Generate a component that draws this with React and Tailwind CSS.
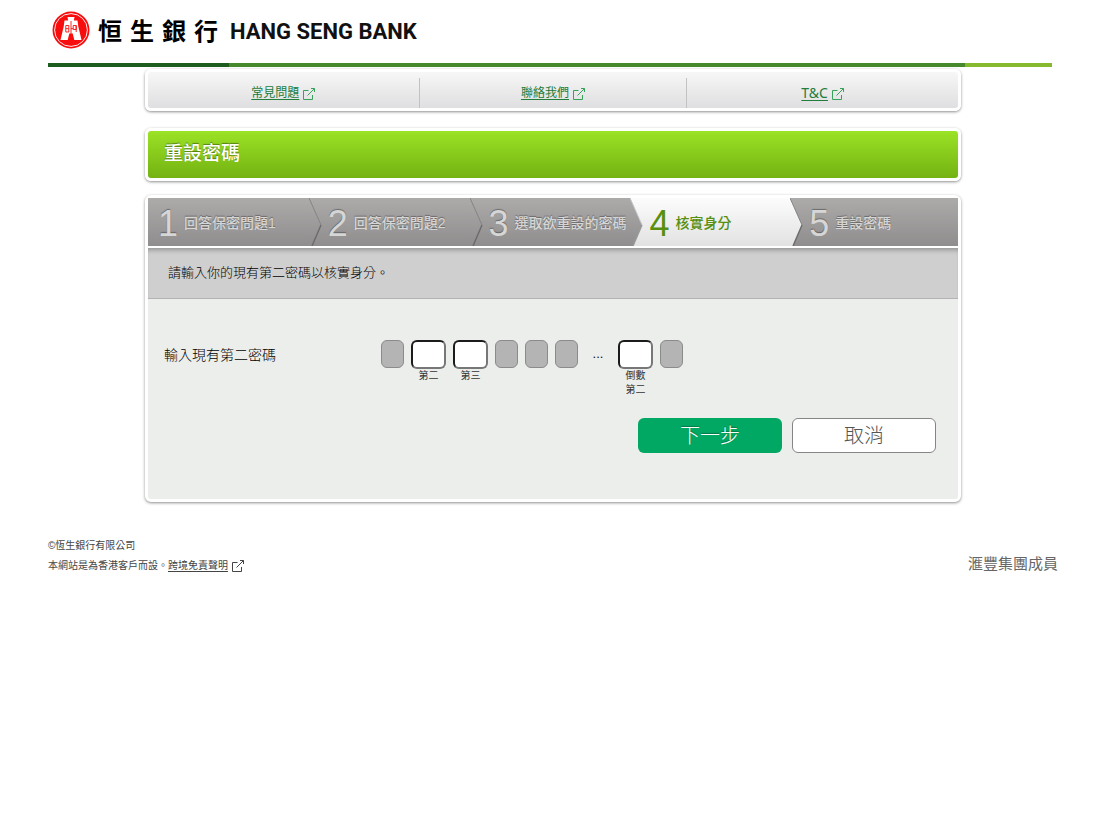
import React from 'react';

const NAV_LINKS = [
    { label: '常見問題', size: 'text-xs' },
    { label: '聯絡我們', size: 'text-xs' },
    { label: 'T&C', size: 'text-sm' },
];

const STEPS = [
    { label: '回答保密問題1' },
    { label: '回答保密問題2' },
    { label: '選取欲重設的密碼' },
    { label: '核實身分', active: true },
    { label: '重設密碼' },
];

const PASSWORD_CELLS = [
    { id: 'p1' },
    { id: 'p2', label: '第二' },
    { id: 'p3', label: '第三' },
    { id: 'p4' },
    { id: 'p5' },
    { id: 'p6' },
    { id: 'gap', ellipsis: true },
    { id: 'p-2', label: '倒數第二' },
    { id: 'p-1' },
];

const ExternalIcon = () => (
    <svg viewBox="0 0 12 12" className="h-3 w-3" fill="none" stroke="currentColor" strokeWidth="1" aria-hidden="true">
        <path d="M5.5 2.5H.5v9h9V7" />
        <path d="M4.5 7.5 11.5.5M8 .5h3.5V4" />
    </svg>
);

const BankLogo = () => (
    <svg viewBox="0 0 38 38" className="h-[38px] w-[38px] shrink-0" aria-hidden="true">
        <circle cx="19" cy="19" r="18.5" fill="#f70d0d" />
        <circle cx="19" cy="19" r="16.4" fill="none" stroke="#fff" strokeWidth="0.9" />
        <path d="M15.5 6h7l-.6 3.5h3.6l.8 6L29.5 29h-7.2l-1.6-6.5h-3.4L15.7 29H8.5l3.2-13.5.8-6h3.6z" fill="#fff" />
        <path
            d="M19 10v13M13.8 14.5h3v6.5h-3zM13.8 17.7h3M21.2 14.5h3v4h-3zM24.2 14.5V21M19 17.7h2.2"
            fill="none"
            stroke="#f70d0d"
            strokeWidth="0.9"
        />
    </svg>
);

const StepArrow = ({ active, nextActive }) => {
    const id = active ? 'arrow-light' : nextActive ? 'arrow-dark-light' : 'arrow-dark';
    return (
        <svg
            viewBox="0 0 13 48"
            preserveAspectRatio="none"
            className={
                nextActive
                    ? 'h-12 w-[13px] shrink-0 bg-linear-to-b from-[#fcfcfc] to-[#e2e2e3]'
                    : 'h-12 w-[13px] shrink-0 bg-linear-to-b from-[#acabaa] to-[#8f8d8d]'
            }
            aria-hidden="true"
        >
            <defs>
                <linearGradient id={id} x1="0" y1="0" x2="0" y2="1">
                    <stop offset="0" stopColor={active ? '#fcfcfc' : '#acabaa'} />
                    <stop offset="1" stopColor={active ? '#e2e2e3' : '#8f8d8d'} />
                </linearGradient>
            </defs>
            <path d="M0 0 12 27 3 48H0z" fill={`url(#${id})`} />
            <path d="M0 0 12 27" fill="none" stroke={nextActive ? '#c4c4c4' : '#858484'} strokeWidth="1" />
            <path d="M12 27 3 48" fill="none" stroke={nextActive ? '#999' : '#6b6a6a'} strokeWidth="1.4" />
        </svg>
    );
};

const Card = ({ className = '', children }) => (
    <div className={`rounded-md border-[3px] border-white shadow-[0_1px_3px_rgba(0,0,0,0.45)] ${className}`}>
        {children}
    </div>
);

const PasswordCell = ({ id, label, ellipsis }) => {
    if (ellipsis) {
        return <span className="w-[26px] text-center text-[13px] leading-7 text-[#111]">...</span>;
    }
    if (!label) {
        return (
            <input
                type="password"
                disabled
                aria-label={id}
                className="h-7 w-[23px] rounded-md border border-[#8b8b8b] bg-[#b5b4b5]"
            />
        );
    }
    return (
        <div className="flex w-[35px] flex-col items-center">
            <input
                id={id}
                type="password"
                maxLength={1}
                className="h-[29px] w-full rounded-md border-2 border-t-[#1b1b1b] border-r-[#777] border-b-[#777] border-l-[#1b1b1b] bg-white text-center text-sm"
            />
            <label htmlFor={id} className="w-5 text-[10px] leading-[14px] text-[#333]">
                {label}
            </label>
        </div>
    );
};

const App = () => (
    <div
        lang="zh-Hant"
        className="min-h-screen bg-white pr-[42px] pl-12 font-['Liberation_Sans','Noto_Sans_CJK_TC',sans-serif] text-[#444]"
    >
        <header className="mr-1.5">
            <div className="flex h-[63px] items-center pb-1 pl-1">
                <BankLogo />
                <div className="ml-2 flex gap-2 font-['Noto_Sans_CJK_TC',sans-serif] text-2xl leading-none font-bold text-black">
                    <span>恒</span>
                    <span>生</span>
                    <span>銀</span>
                    <span>行</span>
                </div>
                <span className="ml-3 pt-1 font-['Roboto',sans-serif] text-[22px] leading-none font-bold text-[#111]">
                    HANG SENG BANK
                </span>
            </div>
            <div className="flex h-1">
                <div className="w-[18%] bg-[#1d5e20]" />
                <div className="flex-1 bg-[#468a2d]" />
                <div className="w-[87px] bg-[#86b92f]" />
            </div>
        </header>

        <main className="mx-auto mt-0.5 max-w-[816px]">
            <Card className="bg-linear-to-b from-[#f7f7f7] to-[#dfdfe1]">
                <nav className="grid h-9 grid-cols-[271fr_268fr_272fr] items-end">
                    {NAV_LINKS.map(({ label, size }, i) => (
                        <div
                            key={label}
                            className={`flex h-[30px] items-center justify-center ${i > 0 ? 'border-l border-[#c2c2c2]' : ''}`}
                        >
                            <a href="#" className="flex items-center gap-1 text-[#217d3b]">
                                <span
                                    className={`font-['Noto_Sans','Noto_Sans_CJK_TC',sans-serif] leading-4 underline underline-offset-2 ${size}`}
                                >
                                    {label}
                                </span>
                                <span className="pt-0.5 text-[#37a35a]">
                                    <ExternalIcon />
                                </span>
                            </a>
                        </div>
                    ))}
                </nav>
            </Card>

            <Card className="mt-[17px] bg-linear-to-b from-[#9be325] to-[#74b212]">
                <h1 className="flex h-[47px] items-center px-4 text-[19px] font-medium text-white [text-shadow:0_-1px_1px_rgba(0,0,0,0.4)]">
                    重設密碼
                </h1>
            </Card>

            <Card className="mt-3.5 bg-[#eceeeb]">
                <ol className="grid grid-cols-[174fr_161fr_161fr_160fr_155fr] border-b-2 border-white">
                    {STEPS.map((step, i) => (
                        <li
                            key={step.label}
                            className={`flex h-12 items-center ${
                                step.active
                                    ? 'bg-linear-to-b from-[#fcfcfc] to-[#e2e2e3] text-[#578f0e]'
                                    : 'bg-linear-to-b from-[#acabaa] to-[#8f8d8d] text-[#d6d6d6] [text-shadow:0_-1px_1px_rgba(0,0,0,0.35)]'
                            }`}
                        >
                            <div
                                className={`flex min-w-0 flex-1 items-center gap-1.5 whitespace-nowrap ${i === 0 ? 'pl-2.5' : 'pl-1.5'}`}
                            >
                                <span className="pt-1 text-4xl leading-none">{i + 1}</span>
                                <span className="pt-0.5 text-sm font-medium">{step.label}</span>
                            </div>
                            {i < STEPS.length - 1 && <StepArrow active={step.active} nextActive={STEPS[i + 1].active} />}
                        </li>
                    ))}
                </ol>

                <p className="h-[51px] border-b border-[#b3b3b3] bg-[#cfcfcf] px-5 text-[13px] leading-[50px] font-light text-black shadow-[inset_0_5px_5px_-3px_rgba(0,0,0,0.3)]">
                    請輸入你的現有第二密碼以核實身分。
                </p>

                <form className="px-4 pt-[41px] pb-[46px]" onSubmit={(e) => e.preventDefault()}>
                    <div className="flex">
                        <label htmlFor="p2" className="w-[217px] text-sm leading-[30px] font-light text-black">
                            輸入現有第二密碼
                        </label>
                        <div className="flex items-start gap-[7px]">
                            {PASSWORD_CELLS.map((cell) => (
                                <PasswordCell key={cell.id} {...cell} />
                            ))}
                        </div>
                    </div>
                    <div className="mt-[21px] mr-1.5 flex justify-end gap-2.5">
                        <button
                            type="submit"
                            className="h-[35px] w-36 rounded-md bg-[#00a864] text-xl leading-none font-light text-white [text-shadow:0_-1px_1px_rgba(0,0,0,0.3)]"
                        >
                            下一步
                        </button>
                        <button
                            type="button"
                            className="h-[35px] w-36 rounded-md border border-[#858585] bg-white text-xl leading-none font-light text-[#555]"
                        >
                            取消
                        </button>
                    </div>
                </form>
            </Card>
        </main>

        <footer className="mt-[34px] flex items-center justify-between">
            <div className="text-[10px] leading-5">
                <p>©恆生銀行有限公司</p>
                <p className="flex items-center">
                    本網站是為香港客戶而設。
                    <a href="#" className="flex items-center gap-1">
                        <span className="underline underline-offset-2">跨境免責聲明</span>
                        <ExternalIcon />
                    </a>
                </p>
            </div>
            <p className="pt-4 text-[15px] leading-5 text-[#666]">滙豐集團成員</p>
        </footer>
    </div>
);

export default App;
